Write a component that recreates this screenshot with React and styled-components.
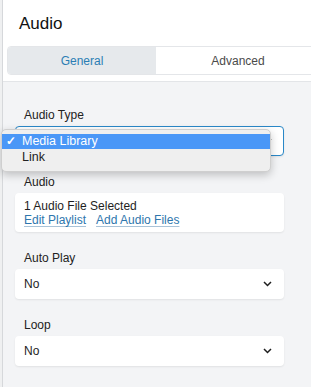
import styled, { createGlobalStyle } from "styled-components";

const GlobalStyle = createGlobalStyle`
  html, body {
    margin: 0;
    padding: 0;
    background: #eff0f1;
    overflow: hidden;
  }
  body {
    font-family: "Liberation Sans", Arial, sans-serif;
    color: #1e1e1e;
  }
`;

const Panel = styled.div`
  margin-left: 2px;
  border-left: 1px solid #d6d8db;
  min-height: 100vh;
  background: #f3f4f6;
`;

const Header = styled.header`
  background: #fff;
  padding: 12px 0 6px 4px;
  border-bottom: 1px solid #e3e5e8;
  overflow: hidden;
`;

const Title = styled.h2`
  margin: 0;
  padding-left: 12px;
  font-size: 17px;
  line-height: 24px;
  font-weight: 500;
  color: #111;
`;

const Tabs = styled.div`
  margin-top: 10px;
  width: 312px;
  display: grid;
  grid-template-columns: 148px 1fr;
  border: 1px solid #e4e6e9;
  border-radius: 4px;
  overflow: hidden;
`;

const Tab = styled.button`
  border: none;
  height: 27px;
  font-family: inherit;
  font-size: 12px;
  background: ${({ $active }) => ($active ? "#e6e9ec" : "#fff")};
  color: ${({ $active }) => ($active ? "#2b7eb4" : "#4a4a4a")};
  padding: 0;
`;

const Content = styled.div`
  padding: 25px 27px 20px 12px;
  display: flex;
  flex-direction: column;
  gap: 18px;
`;

const Field = styled.div`
  position: relative;
`;

const Label = styled.div`
  padding-left: 9px;
  font-size: 12px;
  line-height: 16px;
  margin-bottom: 3px;
  color: #222;
`;

const SelectBox = styled.div`
  height: 30px;
  box-sizing: border-box;
  background: #fff;
  border-radius: 4px;
  border: 1px solid ${({ $focused }) => ($focused ? "#2a88c8" : "transparent")};
  box-shadow: 0 1px 2px rgba(0, 0, 0, 0.08);
  display: flex;
  align-items: center;
  justify-content: space-between;
  padding: 0 11px 0 8px;
  font-size: 12px;
`;

const Card = styled.div`
  background: #fff;
  border-radius: 4px;
  box-shadow: 0 1px 2px rgba(0, 0, 0, 0.08);
  padding: 6px 9px 5px;
  font-size: 12px;
  line-height: 14px;
`;

const Links = styled.div`
  display: flex;
  gap: 10px;
`;

const Link = styled.a`
  color: #2e76ad;
  text-decoration: underline;
  text-decoration-color: #a9c3d8;
  text-underline-offset: 2px;
  cursor: pointer;
`;

const Menu = styled.ul`
  position: absolute;
  left: -14px;
  top: 22px;
  width: 270px;
  margin: 0;
  padding: 4px 0 5px;
  list-style: none;
  box-sizing: border-box;
  background: #efefef;
  border: 1px solid #cfcfcf;
  border-radius: 5px;
  box-shadow: 0 3px 9px rgba(0, 0, 0, 0.22);
  font-size: 12.5px;
  z-index: 10;
`;

const MenuItem = styled.li`
  position: relative;
  height: 15px;
  line-height: 15px;
  padding-left: 20px;
  margin-bottom: 1px;
  background: ${({ $selected }) => ($selected ? "#4a97f7" : "transparent")};
  color: ${({ $selected }) => ($selected ? "#fff" : "#222")};
`;

const Check = styled.span`
  position: absolute;
  left: 4px;
  top: 0;
  font-size: 12px;
  font-weight: 700;
`;

const Chevron = () => (
  <svg width="9" height="6" viewBox="0 0 9 6">
    <polyline points="1,1 4.5,4.5 8,1" fill="none" stroke="#1e1e1e" strokeWidth="1.5" />
  </svg>
);

const Select = ({ value, focused }) => (
  <SelectBox $focused={focused}>
    <span>{value}</span>
    <Chevron />
  </SelectBox>
);

export default function App() {
  return (
    <Panel>
      <GlobalStyle />
      <Header>
        <Title>Audio</Title>
        <Tabs>
          <Tab $active>General</Tab>
          <Tab>Advanced</Tab>
        </Tabs>
      </Header>
      <Content>
        <Field>
          <Label>Audio Type</Label>
          <Select focused />
          <Menu>
            <MenuItem $selected>
              <Check>✓</Check>Media Library
            </MenuItem>
            <MenuItem>Link</MenuItem>
          </Menu>
        </Field>
        <Field>
          <Label>Audio</Label>
          <Card>
            <div>1 Audio File Selected</div>
            <Links>
              <Link>Edit Playlist</Link>
              <Link>Add Audio Files</Link>
            </Links>
          </Card>
        </Field>
        <Field>
          <Label>Auto Play</Label>
          <Select value="No" />
        </Field>
        <Field>
          <Label>Loop</Label>
          <Select value="No" />
        </Field>
      </Content>
    </Panel>
  );
}
